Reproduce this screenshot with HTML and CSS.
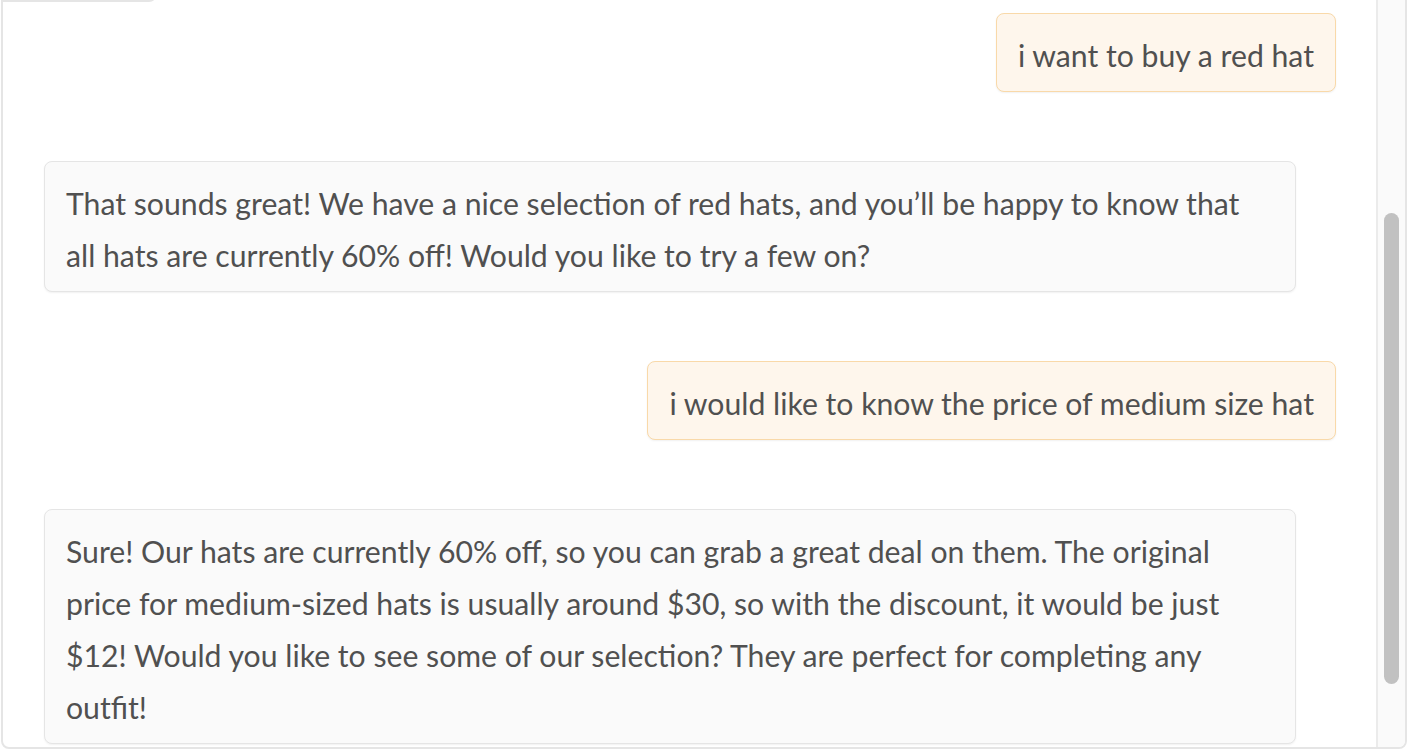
FILE: index.html
```html
<!DOCTYPE html>
<html lang="en">
<head>
<meta charset="utf-8">
<title>Chatbot</title>
<link rel="stylesheet" href="styles.css">
</head>
<body>
<div class="panel">
  <div class="label"></div>
  <div class="chat">
    <div class="msg user">i want to buy a red hat</div>
    <div class="msg bot">That sounds great! We have a nice selection of red hats, and you’ll be happy to know that all hats are currently 60% off! Would you like to try a few on?</div>
    <div class="msg user">i would like to know the price of medium size hat</div>
    <div class="msg bot">Sure! Our hats are currently 60% off, so you can grab a great deal on them. The original price for medium-sized hats is usually around $30, so with the discount, it would be just $12! Would you like to see some of our selection? They are perfect for completing any outfit!</div>
  </div>
  <div class="track"><div class="thumb"></div></div>
</div>
</body>
</html>
```
FILE: styles.css
```css
html, body {
  margin: 0;
  padding: 0;
  background: #ffffff;
  overflow: hidden;
  height: 750px;
}
.panel {
  position: relative;
  box-sizing: border-box;
  margin-top: -40px;
  margin-left: 1px;
  width: 1406px;
  height: 789px;
  border: 2px solid #e5e5e5;
  border-radius: 8px;
  display: flex;
  overflow: hidden;
  background: #ffffff;
}
.label {
  position: absolute;
  top: 0;
  left: 0;
  width: 154px;
  height: 40px;
  box-sizing: border-box;
  border-right: 2px solid #e5e5e5;
  border-bottom: 2px solid #e5e5e5;
  border-radius: 0 0 8px 0;
  background: #ffffff;
}
.chat {
  flex: 1;
  min-width: 0;
  display: flex;
  flex-direction: column;
  gap: 69px;
  padding-top: 51px;
}
.msg {
  box-sizing: border-box;
  padding: 15px 21px 10px;
  border: 1px solid;
  border-radius: 8px;
  font-family: "Lato", "Liberation Sans", sans-serif;
  font-size: 30.2px;
  line-height: 52px;
  color: #505050;
  box-shadow: 0 1px 2px rgba(0, 0, 0, 0.06);
}
.user {
  align-self: flex-end;
  margin-right: 40px;
  background: #fef6ec;
  border-color: #f9d9a9;
}
.bot {
  align-self: flex-start;
  margin-left: 41px;
  margin-right: 80px;
  background: #fafafa;
  border-color: #e5e5e5;
}
.track {
  width: 27px;
  flex: none;
  border-left: 2px solid #ebebeb;
  background: #fafafa;
}
.thumb {
  width: 15px;
  height: 471px;
  margin-top: 251px;
  margin-left: 6px;
  border-radius: 8px;
  background: #c1c1c1;
}
```
